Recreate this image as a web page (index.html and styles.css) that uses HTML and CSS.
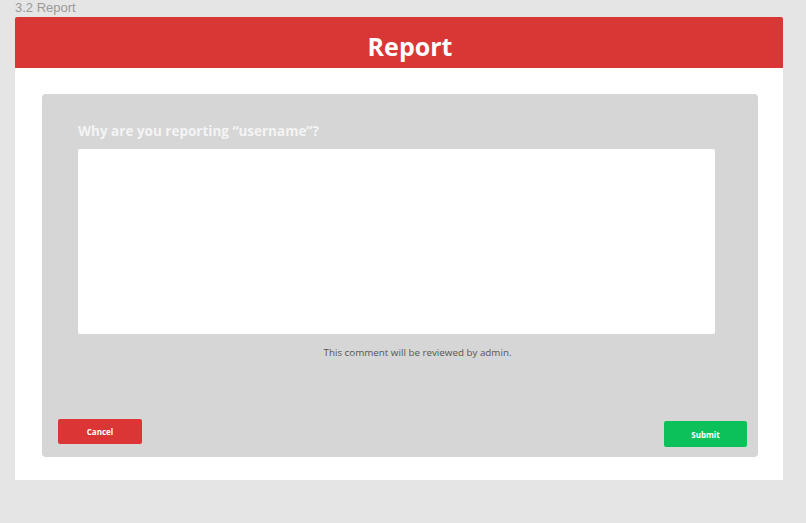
FILE: index.html
```html
<!DOCTYPE html>
<html>
<head>
<meta charset="utf-8">
<link rel="stylesheet" href="styles.css">
</head>
<body>
<div class="page-label">3.2 Report</div>
<div class="frame">
  <header class="header">Report</header>
  <div class="panel">
    <div class="card">
      <div class="question">Why are you reporting “username”?</div>
      <div class="textbox"></div>
      <div class="note">This comment will be reviewed by admin.</div>
      <div class="actions">
        <button class="btn btn-cancel">Cancel</button>
        <button class="btn btn-submit">Submit</button>
      </div>
    </div>
  </div>
</div>
</body>
</html>
```
FILE: styles.css
```css
html, body {
  margin: 0;
  padding: 0;
  background: #e5e5e5;
  width: 806px;
  height: 523px;
  overflow: hidden;
}
.page-label {
  font-family: "Liberation Sans", Arial, sans-serif;
  font-size: 13px;
  color: #9a9a9a;
  height: 17px;
  line-height: 16px;
  padding-left: 15px;
}
.frame {
  margin-left: 15px;
  width: 768px;
}
.header {
  background: #d93636;
  height: 51px;
  text-align: center;
  color: #fff;
  font-family: "Open Sans", sans-serif;
  font-weight: 700;
  font-size: 25px;
  border-radius: 2px 2px 0 0;
  padding-left: 22px;
  padding-top: 7px;
  box-sizing: border-box;
  line-height: 44px;
}
.panel {
  background: #fff;
  padding: 26px 25px 23px 27px;
}
.card {
  background: #d6d6d6;
  border-radius: 4px;
  padding: 27px 11px 10px 16px;
  display: flex;
  flex-direction: column;
  height: 326px;
}
.question {
  font-family: "Open Sans", sans-serif;
  font-weight: 700;
  font-size: 13.5px;
  color: #f4f4f4;
  line-height: 20px;
  margin-left: 20px;
  height: 28px;
}
.textbox {
  background: #fff;
  height: 185px;
  margin-left: 20px;
  margin-right: 32px;
  border-radius: 2px;
}
.note {
  font-family: "Open Sans", sans-serif;
  font-size: 9.8px;
  color: #555;
  text-align: center;
  margin-top: 12px;
  line-height: 14px;
  padding-left: 30px;
}
.actions {
  display: flex;
  justify-content: space-between;
  align-items: flex-start;
  margin-top: auto;
}
.btn {
  border: none;
  border-radius: 2px;
  color: #fff;
  font-family: "Open Sans", sans-serif;
  font-weight: 700;
  font-size: 8px;
  padding: 0;
  cursor: pointer;
}
.btn-cancel {
  background: #dc3535;
  width: 84px;
  height: 25px;
}
.btn-submit {
  background: #0cc15a;
  width: 83px;
  height: 26px;
  margin-top: 2px;
}
```
